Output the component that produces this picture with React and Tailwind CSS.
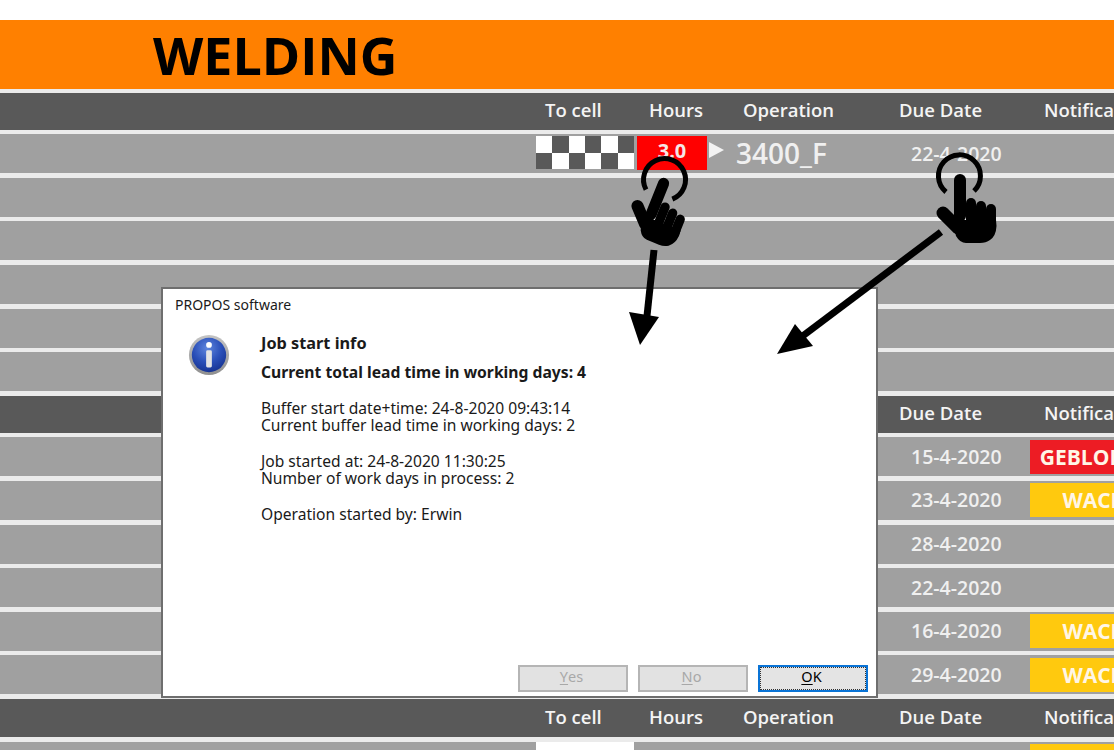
import React from "react";

const rowGrid = "grid grid-cols-[536px_101px_70px_29px_175px_119px_170px] grid-rows-[39px] items-center";
const sans = "font-['Open_Sans',sans-serif]";
const dialogFont = "font-['Noto_Sans',sans-serif]";

const firstRows = [
  { job: true, date: "22-4-2020" },
  {},
  {},
  {},
  {},
  {},
];

const secondRows = [
  { date: "15-4-2020", note: "GEBLOKKEERD", tone: "bg-[#ed1c24]" },
  { date: "23-4-2020", note: "WACHTEN", tone: "bg-[#ffc90e]" },
  { date: "28-4-2020" },
  { date: "22-4-2020" },
  { date: "16-4-2020", note: "WACHTEN", tone: "bg-[#ffc90e]" },
  { date: "29-4-2020", note: "WACHTEN", tone: "bg-[#ffc90e]" },
];

function HeaderRow({ className = "h-[37px]" }) {
  return (
    <div className={`grid grid-cols-[545px_104px_94px_156px_145px_200px] items-center shrink-0 bg-[#595959] pb-[2px] text-[18.5px] font-semibold text-[#f4f4f4] whitespace-nowrap ${sans} ${className}`}>
      <span />
      <span>To cell</span>
      <span>Hours</span>
      <span>Operation</span>
      <span>Due Date</span>
      <span>Notification</span>
    </div>
  );
}

function Checker() {
  const cells = Array.from({ length: 12 }, (_, i) => {
    const row = Math.floor(i / 6);
    return (i + row) % 2 === 0;
  });
  return (
    <div className="grid grid-cols-6 w-[98px] h-[33px] mb-[2px]">
      {cells.map((light, i) => (
        <div key={i} className={light ? "bg-white" : "bg-[#595959]"} />
      ))}
    </div>
  );
}

function DataRow({ job, date, note, tone, topChecker }) {
  return (
    <div className={`${rowGrid} h-[39px] shrink-0 bg-[#a0a0a0] ${sans} whitespace-nowrap`}>
      <span />
      <div>{job && <Checker />}{topChecker && <div className="w-[98px] h-[39px] bg-white" />}</div>
      <div>
        {job && (
          <div className="flex h-[34px] mb-[1px] items-center justify-center bg-[#ff0000] text-[20px] leading-[24px] font-bold text-[#f6e6e6] pb-[5px]">3.0</div>
        )}
      </div>
      <div className="flex justify-start pl-[2px] pb-[8px]">
        {job && <div className="h-0 w-0 border-y-[8px] border-l-[15px] border-y-transparent border-l-[#f2f2f2]" />}
      </div>
      <div className="text-[28px] leading-[32px] font-semibold text-[#f0f0f0] pb-[1px]">{job ? "3400_F" : ""}</div>
      <div className="text-[19.5px] leading-[26px] font-semibold text-[#f0f0f0]">{date}</div>
      <div className={`flex h-[34px] items-center justify-center text-[21px] leading-[26px] font-bold text-[#fff6e6] ${tone || ""}`}>{note}</div>
    </div>
  );
}

function InfoIcon() {
  return (
    <svg width="42" height="42" viewBox="0 0 44 44" className="shrink-0 -mt-[1px]">
      <defs>
        <radialGradient id="infoBlue" cx="45%" cy="30%" r="75%">
          <stop offset="0%" stopColor="#5f86de" />
          <stop offset="55%" stopColor="#2a4fb8" />
          <stop offset="100%" stopColor="#14308e" />
        </radialGradient>
        <linearGradient id="infoRim" x1="0" y1="0" x2="0" y2="1">
          <stop offset="0%" stopColor="#c4c4c4" />
          <stop offset="100%" stopColor="#8f8f8f" />
        </linearGradient>
      </defs>
      <circle cx="22" cy="22" r="21" fill="url(#infoRim)" />
      <circle cx="22" cy="22" r="18" fill="url(#infoBlue)" />
      <circle cx="22" cy="11.5" r="3" fill="#ffffff" />
      <rect x="19" y="17" width="6" height="18" rx="1.5" fill="#e4e4e4" />
    </svg>
  );
}

function DialogButton({ children, hot, focused }) {
  return (
    <button
      className={`flex h-[27px] w-[110px] items-center justify-center border-2 pb-[3px] pr-[3px] text-[14.5px] ${
        focused
          ? "border-[#0a74d6] bg-[#e4e4e4] text-black outline-1 outline-dotted -outline-offset-3 outline-[#333333]"
          : "border-[#b5b5b5] bg-[#e2e2e2] text-[#a8a8a8]"
      }`}
    >
      <span className="underline underline-offset-2">{hot}</span>
      {children}
    </button>
  );
}

function JobDialog() {
  return (
    <div className={`absolute left-[161px] top-[287px] flex h-[411px] w-[717px] flex-col border-2 border-[#6e6e6e] bg-white text-[#1a1a1a] ${dialogFont}`}>
      <div className="pl-[12px] pt-[6px] text-[14px] leading-[20px]">PROPOS software</div>
      <div className="flex flex-1 pl-[25px] pt-[20px]">
        <InfoIcon />
        <div className="pl-[31px] text-[15.6px] leading-[17px]">
          <p className="text-[16.3px] font-bold leading-[20px] mt-[-2px]">Job start info</p>
          <p className="mt-[9px] text-[15.7px] font-bold leading-[20px]">Current total lead time in working days: 4</p>
          <p className="mt-[18px]">Buffer start date+time: 24-8-2020 09:43:14</p>
          <p>Current buffer lead time in working days: 2</p>
          <p className="mt-[19px]">Job started at: 24-8-2020 11:30:25</p>
          <p>Number of work days in process: 2</p>
          <p className="mt-[19px]">Operation started by: Erwin</p>
        </div>
      </div>
      <div className="flex justify-end gap-[10px] pb-[4px] pr-[8px]">
        <DialogButton hot="Y">es</DialogButton>
        <DialogButton hot="N">o</DialogButton>
        <DialogButton hot="O" focused>K</DialogButton>
      </div>
    </div>
  );
}

// hand drawn around the centre of its ring, finger pointing up
function Hand({ x, y, angle, scale = 1 }) {
  return (
    <g transform={`translate(${x} ${y}) rotate(${angle})`} stroke="#000" strokeLinecap="round" fill="none">
      <path d="M-14 16 A21 21 0 1 1 14 15" strokeWidth="5" strokeLinecap="butt" />
      <g transform={`scale(${scale})`}>
        <path d="M0 4 L0 40" strokeWidth="12" />
        <path d="M11 27 L11 50" strokeWidth="10" />
        <path d="M21 30 L21 50" strokeWidth="10" />
        <path d="M31 33 L31 50" strokeWidth="10" />
        <path d="M-17 37 L-2 52" strokeWidth="13" />
        <path d="M-8 44 L36 44 L36.5 50 Q36 60 30 64 Q26 67 20 67 L6 67 Q0 67 -4 60 Z" fill="#000" stroke="none" />
      </g>
    </g>
  );
}

function Pointers() {
  return (
    <svg className="absolute left-0 top-0" width="1114" height="750" viewBox="0 0 1114 750">
      <Hand x={665} y={180} angle={22} scale={0.93} />
      <Hand x={960} y={176} angle={0} />
      <path d="M654 250 L647 316" stroke="#000" strokeWidth="7" />
      <path d="M640 345 L629 312 L659 317 Z" fill="#000" />
      <path d="M941 232 L800 338" stroke="#000" strokeWidth="7" />
      <path d="M777 354 L795 324 L813 346 Z" fill="#000" />
    </svg>
  );
}

export default function App() {
  return (
    <div className="relative h-[750px] w-[1114px] overflow-hidden bg-[#ebebeb]">
      <div className="h-[20px] bg-white" />
      <div className={`flex h-[69px] items-center bg-[#ff8000] pl-[153px] text-[52px] font-bold text-black ${sans}`}>WELDING</div>

      <div className="flex flex-col gap-[4.6px] pt-[3.6px]">
        <HeaderRow />
        {firstRows.map((r, i) => (
          <DataRow key={i} {...r} />
        ))}
        <HeaderRow />
        {secondRows.map((r, i) => (
          <DataRow key={i} {...r} />
        ))}
        <HeaderRow className="h-[38px]" />
        <DataRow topChecker tone="bg-[#ffc90e]" />
      </div>

      <JobDialog />
      <Pointers />
    </div>
  );
}
